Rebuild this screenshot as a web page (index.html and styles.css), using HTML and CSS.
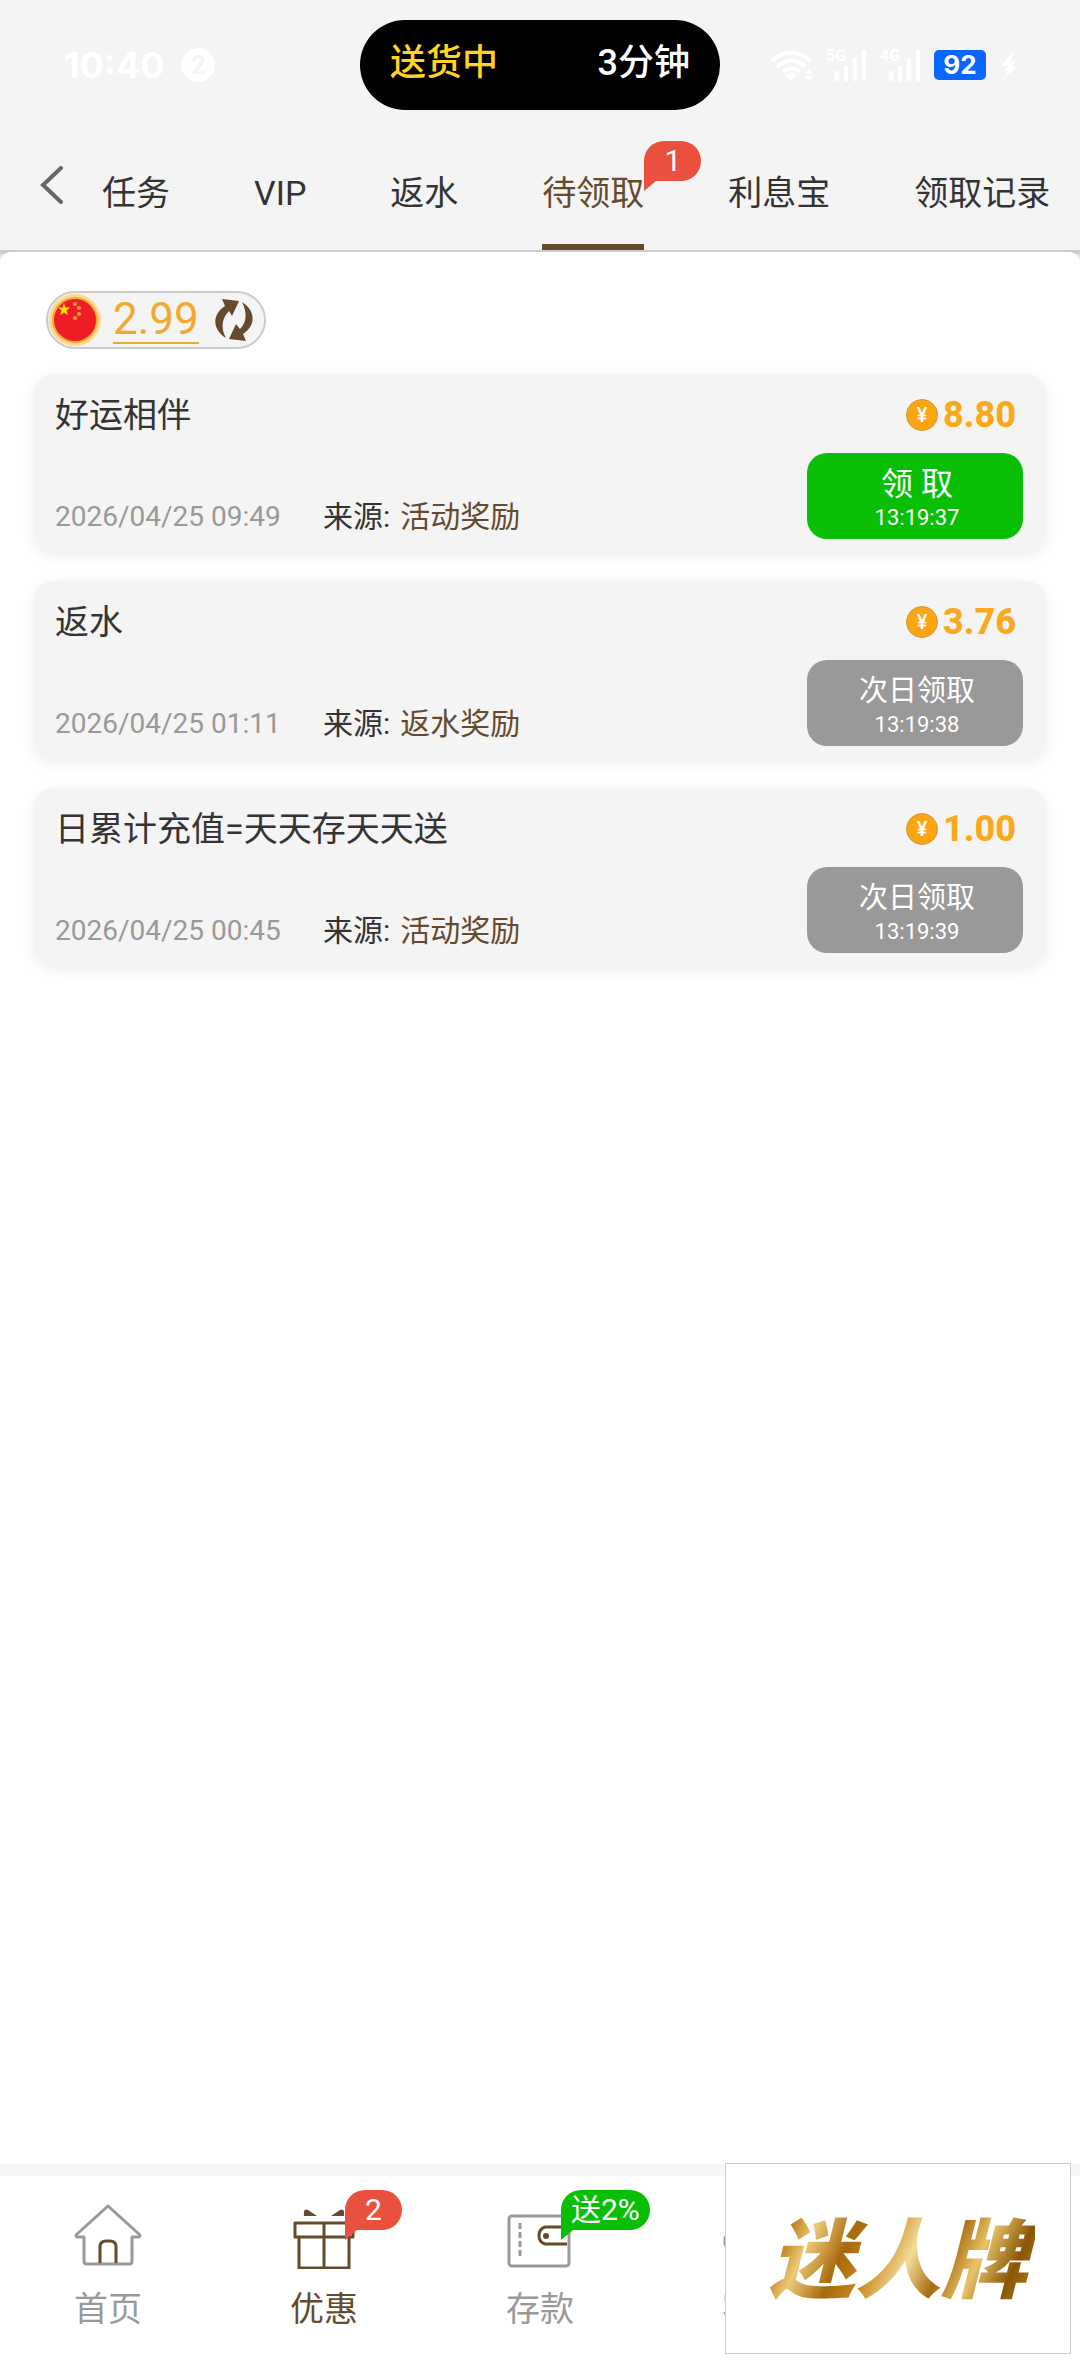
FILE: index.html
```html
<!DOCTYPE html>
<html lang="zh-CN">

<head>
    <meta charset="utf-8" />
    <meta name="viewport" content="width=device-width" />
    <title>待领取</title>
    <link rel="stylesheet" href="styles.css">
</head>

<body>
    <header class="header">
        <div class="status">
            <div class="status-left">
                <span class="clock">10:40</span>
                <span class="notice">2</span>
            </div>
            <div class="island">
                <span class="island-state">送货中</span>
                <span>3分钟</span>
            </div>
            <div class="status-right">
                <svg class="wifi" viewBox="0 0 44 32">
                    <g fill="none" stroke="#fff" stroke-width="4">
                        <path d="M2 12a26 26 0 0 1 38 0" />
                        <path d="M7 18a19 19 0 0 1 28 0" />
                        <path d="M13 23a12 12 0 0 1 17 0" />
                    </g>
                    <path fill="#fff" d="M15 26q6-5 12 0l-6 6zM35 25l4-5 4 5zM35 27h8l-4 5z" />
                </svg>
                <div class="signal">
                    <span>5G</span>
                    <svg viewBox="0 0 32 32"><path fill="#fff" d="M0 22h4v10h-4zM9 17h4v15h-4zM18 9h4v23h-4zM27 1h4v31h-4z" /></svg>
                </div>
                <div class="signal">
                    <span>4G</span>
                    <svg viewBox="0 0 32 32"><path fill="#fff" d="M0 22h4v10h-4zM9 17h4v15h-4zM18 9h4v23h-4zM27 1h4v31h-4z" /></svg>
                </div>
                <span class="battery">92</span>
                <svg class="bolt" viewBox="0 0 18 30"><path fill="#fff" d="M14 0 1 16h7L4 21h4L2 30 17 17h-6l5-6h-5z" /></svg>
            </div>
        </div>
        <div class="tabs-row">
            <button class="back" type="button" aria-label="返回">
                <svg viewBox="0 0 24 38"><path fill="none" stroke="#666" stroke-width="4" stroke-linecap="round" d="M21 2 3 19l18 17" /></svg>
            </button>
            <nav class="tabs">
                <a href="#">任务</a>
                <a href="#">VIP</a>
                <a href="#">返水</a>
                <a href="#" class="active">待领取<span class="badge">1</span></a>
                <a href="#">利息宝</a>
                <a href="#">领取记录</a>
            </nav>
        </div>
    </header>

    <main class="content">
        <div class="balance">
            <svg class="flag" viewBox="0 0 52 52">
                <circle cx="26" cy="26" r="26" fill="#ffd98a" />
                <circle cx="26" cy="26" r="23" fill="#f0a940" />
                <circle cx="26" cy="26" r="21" fill="#ee1c25" />
                <path fill="#ffde00" d="m15 9 1.500 4.500h4.500l-3.500 3 1.300 4.500-3.800-2.600-3.800 2.600 1.300-4.500L9 13.500h4.500z" />
                <g fill="#f9a13a">
                    <circle cx="26" cy="10" r="2" />
                    <circle cx="30" cy="14" r="2" />
                    <circle cx="30" cy="20" r="2" />
                    <circle cx="26" cy="24" r="2" />
                </g>
            </svg>
            <a class="balance-num" href="#">2.99</a>
            <button class="refresh" type="button" aria-label="刷新">
                <svg viewBox="0 0 40 42"><path fill="#654a2d" d="M8 0 25 2 18 17 15 12C7 20 7 30 12 39 0 32-4 17 11 7zM28 3C41 11 43 26 29 35L32 42 15 40 22 25 26 30C32 24 34 15 28 3z" /></svg>
            </button>
        </div>

        <section class="card">
            <div class="info">
                <h2>好运相伴</h2>
                <p><time>2026/04/25 09:49</time><span>来源:</span><em>活动奖励</em></p>
            </div>
            <div class="action">
                <div class="amount"><i class="coin">¥</i>8.80</div>
                <button class="claim ready" type="button"><b>领 取</b><small>13:19:37</small></button>
            </div>
        </section>

        <section class="card">
            <div class="info">
                <h2>返水</h2>
                <p><time>2026/04/25 01:11</time><span>来源:</span><em>返水奖励</em></p>
            </div>
            <div class="action">
                <div class="amount"><i class="coin">¥</i>3.76</div>
                <button class="claim" type="button"><b>次日领取</b><small>13:19:38</small></button>
            </div>
        </section>

        <section class="card">
            <div class="info">
                <h2>日累计充值=天天存天天送</h2>
                <p><time>2026/04/25 00:45</time><span>来源:</span><em>活动奖励</em></p>
            </div>
            <div class="action">
                <div class="amount"><i class="coin">¥</i>1.00</div>
                <button class="claim" type="button"><b>次日领取</b><small>13:19:39</small></button>
            </div>
        </section>
    </main>

    <nav class="bottom">
        <a href="#">
            <svg viewBox="0 0 68 68" fill="none" stroke="#999" stroke-width="3" stroke-linejoin="round">
                <path d="M34 5 2 34q0 2 2 2h6v24q0 3 3 3h43q2 0 2-3V36h6q2 0 2-2z" />
                <path stroke="#654a2d" d="M26 62V46q0-6 6-6h4q6 0 6 6v16" />
            </svg>
            首页
        </a>
        <a href="#" class="active">
            <svg viewBox="0 0 68 68" fill="none" stroke="#654a2d" stroke-width="3" stroke-linejoin="round">
                <path d="M5 22h58v14H5zM9 36h50v31H9zM34 22v45" />
                <path fill="#654a2d" stroke="none" d="M14 15q-1-8 4-6l9 6zM54 15q1-8-4-6l-9 6z" />
            </svg>
            优惠
            <span class="badge">2</span>
        </a>
        <a href="#">
            <svg viewBox="0 0 68 68" fill="none" stroke="#999" stroke-width="3">
                <rect x="3" y="15" width="60" height="50" rx="3" />
                <path stroke-dasharray="6 3" d="M14 22v34" />
                <path stroke="#654a2d" d="M61 26H39a9 9 0 0 0 0 17h22" />
                <circle cx="40" cy="35" r="3" fill="#654a2d" stroke="none" />
            </svg>
            存款
            <span class="badge green">送2%</span>
        </a>
        <a href="#">
            <svg viewBox="0 0 68 68" fill="none" stroke="#999" stroke-width="3">
                <path d="M9 34a25 25 0 0 1 50 0" />
                <rect x="3" y="34" width="8" height="12" rx="4" />
                <rect x="57" y="34" width="8" height="12" rx="4" />
            </svg>
            客服
        </a>
    </nav>
    <div class="float-logo"><span>迷人牌</span></div>
</body>

</html>
```
FILE: styles.css
```css
* {
    box-sizing: border-box;
}

body {
    margin: 0;
    min-height: 100vh;
    display: flex;
    flex-direction: column;
    font-family: Roboto, "Noto Sans CJK SC", sans-serif;
    font-size: 34px;
    color: #333;
    background-color: #fff;
}

a {
    color: inherit;
    text-decoration: none;
}

button {
    border: 0;
    padding: 0;
    background: none;
    font-family: inherit;
}

svg {
    display: block;
}

/* header */
.header {
    background-color: #f4f4f4;
    border-bottom: 2px solid #ccc;
    box-shadow: 0 4px 12px rgba(0, 0, 0, 0.4);
}

.status {
    display: grid;
    grid-template-columns: 1fr 360px 1fr;
    align-items: center;
    padding: 20px 0;
}

.status-left {
    display: flex;
    align-items: center;
    gap: 17px;
    padding-left: 64px;
    color: #fff;
}

.clock {
    font-family: Inter, sans-serif;
    font-size: 36px;
    font-weight: 700;
    line-height: 40px;
}

.notice {
    width: 34px;
    height: 34px;
    border-radius: 50%;
    background-color: #fff;
    color: #f4f4f4;
    font-size: 26px;
    font-weight: 700;
    line-height: 34px;
    text-align: center;
}

.island {
    display: flex;
    justify-content: space-between;
    height: 90px;
    padding: 0 30px;
    border-radius: 45px;
    background-color: #000;
    color: #fff;
    font-size: 36px;
    font-weight: 500;
    line-height: 86px;
}

.island-state {
    color: #ffd223;
}

.status-right {
    display: flex;
    align-items: center;
    padding-left: 50px;
    color: #fff;
}

.wifi {
    width: 44px;
    height: 32px;
    margin-right: 12px;
}

.signal {
    display: flex;
    position: relative;
    width: 41px;
    margin-right: 13px;
    justify-content: flex-end;
}

.signal span {
    position: absolute;
    left: 0;
    top: 0;
    font-size: 16px;
    font-weight: 700;
    line-height: 14px;
}

.signal svg {
    width: 32px;
    height: 32px;
}

.battery {
    width: 52px;
    height: 30px;
    border-radius: 5px;
    background-color: #0a66ff;
    font-family: Inter, sans-serif;
    font-size: 26px;
    font-weight: 700;
    line-height: 30px;
    text-align: center;
}

.bolt {
    width: 18px;
    height: 30px;
    margin-left: 14px;
}

.tabs-row {
    display: flex;
    height: 120px;
}

.back {
    padding: 0 38px 10px 40px;
}

.back svg {
    width: 24px;
    height: 38px;
}

.tabs {
    display: flex;
    flex: 1;
    gap: 84px;
    white-space: nowrap;
}

.tabs a {
    position: relative;
    line-height: 50px;
    padding: 38px 0 26px;
    border-bottom: 6px solid transparent;
}

.tabs .active {
    color: #654a2d;
    border-color: #654a2d;
}

/* speech bubble counter */
.badge {
    position: absolute;
    left: 100%;
    top: 11px;
    min-width: 57px;
    height: 40px;
    padding: 0 10px;
    border-radius: 20px 20px 20px 0;
    background-color: #e9503e;
    color: #fff;
    font-size: 30px;
    line-height: 40px;
    text-align: center;
    white-space: nowrap;
}

.badge::after {
    content: "";
    position: absolute;
    left: 0;
    top: 100%;
    border-top: 10px solid #e9503e;
    border-right: 12px solid transparent;
}

.badge.green {
    background-color: #08bf06;
}

.badge.green::after {
    border-top-color: #08bf06;
}

/* rewards */
.content {
    position: relative;
    flex: 1;
    padding: 39px 34px 30px;
    border-radius: 10px;
    background-color: #fff;
}

.balance {
    display: inline-flex;
    align-items: center;
    height: 58px;
    margin: 0 0 25px 12px;
    padding: 0 10px 0 1px;
    border: 2px solid #ccc;
    border-radius: 29px;
    background-color: #f4f4f4;
    vertical-align: top;
}

.flag {
    width: 52px;
    height: 52px;
}

.balance-num {
    margin: 0 15px 0 12px;
    border-bottom: 2px solid #e8ab38;
    color: #f2a92e;
    font-size: 44px;
    line-height: 46px;
}

.refresh svg {
    width: 40px;
    height: 42px;
}

.card {
    display: flex;
    justify-content: space-between;
    height: 177px;
    margin-bottom: 30px;
    padding: 16px 23px 12px 21px;
    border-radius: 20px;
    background-color: #f4f4f4;
    box-shadow: 0 4px 14px rgba(0, 0, 0, 0.08);
}

.info {
    display: flex;
    flex-direction: column;
    justify-content: space-between;
}

.info h2 {
    margin: 0;
    font-size: 34px;
    font-weight: 400;
    line-height: 50px;
}

.info p {
    display: flex;
    align-items: center;
    margin: 0;
    font-size: 30px;
    line-height: 44px;
}

.info time {
    width: 268px;
    color: #999;
    font-size: 28px;
}

.info em {
    margin-left: 10px;
    color: #654a2d;
    font-style: normal;
}

.action {
    display: flex;
    flex-direction: column;
    justify-content: space-between;
    align-items: flex-end;
}

.amount {
    display: flex;
    align-items: center;
    gap: 5px;
    padding-right: 7px;
    color: #fba91b;
    font-size: 36px;
    font-weight: 800;
    line-height: 50px;
}

.coin {
    width: 32px;
    height: 32px;
    border: 1px solid #d19a3c;
    border-radius: 50%;
    background-color: #fba414;
    color: #fff;
    font-size: 20px;
    font-style: normal;
    font-weight: 500;
    line-height: 30px;
    text-align: center;
}

.claim {
    display: flex;
    flex-direction: column;
    align-items: center;
    width: 216px;
    height: 86px;
    padding: 11px 0 0 4px;
    border-radius: 20px;
    background-color: #999;
    color: #fff;
}

.claim b {
    font-size: 29px;
    font-weight: 400;
    line-height: 40px;
}

.claim small {
    font-size: 22px;
    line-height: 28px;
}

.ready {
    background-color: #08bf06;
}

.ready b {
    font-size: 32px;
}

/* bottom bar */
.bottom {
    display: grid;
    grid-template-columns: repeat(5, 1fr);
    height: 212px;
    border-top: 12px solid #f6f6f6;
    color: #999;
}

.bottom a {
    position: relative;
    display: flex;
    flex-direction: column;
    align-items: center;
    padding-top: 25px;
    line-height: 50px;
}

.bottom svg {
    width: 68px;
    height: 68px;
    margin-bottom: 15px;
}

.bottom .active {
    color: #654a2d;
}

.bottom .badge {
    left: calc(50% + 21px);
    top: 14px;
}

.float-logo {
    position: fixed;
    right: 9px;
    bottom: 22px;
    display: flex;
    justify-content: center;
    align-items: center;
    width: 346px;
    height: 191px;
    padding-top: 6px;
    border: 1px solid #ccc;
    background-color: #fff;
}

.float-logo span {
    padding: 0 8px;
    background-image: linear-gradient(115deg, #8a5a0c, #b87a14 12%, #ecca78 20%, #a8680c 32%, #c98a1e 42%, #f3dc9a 53%, #a86a10 64%, #e8c468 74%, #8a5606 86%, #c8902a);
    background-clip: text;
    -webkit-background-clip: text;
    color: transparent;
    font-size: 86px;
    font-style: italic;
    font-weight: 900;
    line-height: 120px;
}
```
